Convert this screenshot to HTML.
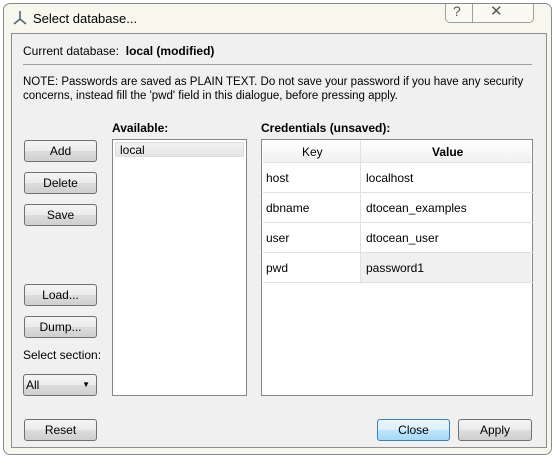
<!DOCTYPE html><html><head><style>
body{margin:0;width:555px;height:456px;background:#fff;font-family:"Liberation Sans",sans-serif;font-size:12px;color:#000;position:relative;overflow:hidden}
.a{position:absolute}
.frame{left:3px;top:3px;width:547px;height:450px;border:1px solid #8a8a8a;border-radius:7px;background:#f8f7ee}
.panel{left:11px;top:33px;width:534px;height:413px;border:1px solid #8e8e8e;background:#f0f0f0}
.btn{position:absolute;height:20px;border:1px solid #707070;border-radius:3px;background:linear-gradient(#f4f4f4,#ebebeb 50%,#dddddd 50%,#cfcfcf);text-align:center;line-height:20px;font-size:12px}
.box{position:absolute;background:#fff;border:1px solid #828790}
.row{position:absolute;left:1px;width:270px;height:29px;border-bottom:1px solid #e0e0e0}
.row span{position:absolute;top:8px}
</style></head><body>
<div class="a frame"></div>
<div class="a" style="left:445px;top:4px;width:87px;height:18px;border:1px solid #a0a0a0;border-top:none;border-radius:0 0 5px 5px;background:#fafaf2"></div>
<div class="a" style="left:472px;top:4px;width:1px;height:19px;background:#a0a0a0"></div>
<div class="a" style="left:453px;top:3px;font-size:14px;color:#555">?</div>
<div class="a" style="left:490px;top:2px;font-size:15px;color:#555">✕</div>
<svg class="a" style="left:12px;top:10px" width="16" height="16"><path d="M8 1V9M8 9L2 14M8 9L14 14" stroke="#556677" stroke-width="1.6" fill="none"/></svg>
<div class="a" style="left:33px;top:11px;font-size:13px">Select database...</div>
<div class="a panel"></div>
<div class="a" style="left:23px;top:44px">Current database:&nbsp; <b>local (modified)</b></div>
<div class="a" style="left:23px;top:64px;width:509px;height:1px;background:#a0a0a0"></div>
<div class="a" style="left:23px;top:75px;line-height:14px;font-size:11.5px">NOTE: Passwords are saved as PLAIN TEXT. Do not save your password if you have any security<br>concerns, instead fill the 'pwd' field in this dialogue, before pressing apply.</div>
<div class="a" style="left:112px;top:121px;font-weight:bold">Available:</div>
<div class="a" style="left:261px;top:121px;font-weight:bold">Credentials (unsaved):</div>
<div class="btn" style="left:24px;top:140px;width:71px">Add</div>
<div class="btn" style="left:24px;top:172px;width:71px">Delete</div>
<div class="btn" style="left:24px;top:204px;width:71px">Save</div>
<div class="btn" style="left:24px;top:284px;width:71px">Load...</div>
<div class="btn" style="left:24px;top:316px;width:71px">Dump...</div>
<div class="a" style="left:23px;top:348px">Select section:</div>
<div class="btn" style="left:23px;top:374px;width:72px;text-align:left;padding-left:2px;width:70px">All<span style="position:absolute;right:6px;top:0;font-size:8px">▼</span></div>
<div class="box" style="left:112px;top:139px;width:133px;height:255px">
<div class="a" style="left:2px;top:2px;width:129px;height:15px;background:linear-gradient(#f2f2f2,#e6e6e6);border:1px solid #dcdcdc;border-radius:2px;line-height:15px;padding-left:4px;box-sizing:border-box">local</div></div>
<div class="box" style="left:261px;top:139px;width:270px;height:255px">
<div class="a" style="left:1px;top:1px;width:268px;height:21px;background:linear-gradient(#fff,#f0f0f0);border-bottom:1px solid #e0e0e0"></div>
<div class="a" style="left:98px;top:1px;width:1px;height:141px;background:#e0e0e0"></div>
<div class="a" style="left:40px;top:5px">Key</div>
<div class="a" style="left:170px;top:5px;font-weight:bold">Value</div>
<div class="row" style="top:23px"><span style="left:3px">host</span><span style="left:103px">localhost</span></div>
<div class="row" style="top:53px"><span style="left:3px">dbname</span><span style="left:103px">dtocean_examples</span></div>
<div class="row" style="top:83px"><span style="left:3px">user</span><span style="left:103px">dtocean_user</span></div>
<div class="row" style="top:113px"><div class="a" style="left:98px;top:0;width:170px;height:29px;background:#f0f0f0"></div><span style="left:3px">pwd</span><span style="left:103px">password1</span></div>
</div>
<div class="btn" style="left:24px;top:419px;width:71px">Reset</div>
<div class="btn" style="left:377px;top:419px;width:71px;border-color:#3c7fb1;background:linear-gradient(#eaf6fd,#d9f0fc 50%,#bee6fd 50%,#a7d9f5)">Close</div>
<div class="btn" style="left:458px;top:419px;width:72px">Apply</div>
</body></html>
